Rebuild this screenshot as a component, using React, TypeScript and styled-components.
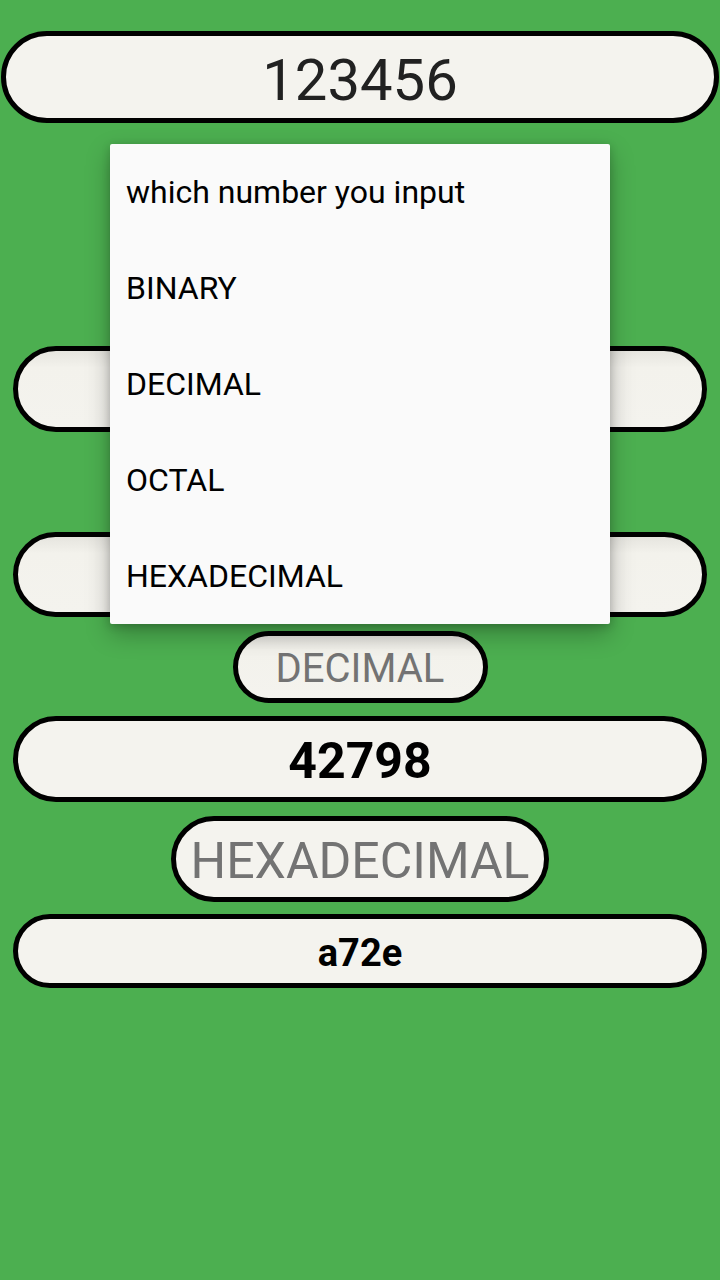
import React from "react";
import styled, { createGlobalStyle } from "styled-components";

const Global = createGlobalStyle`
  html, body { margin: 0; padding: 0; background: #4caf50; }
  body { font-family: Roboto, "Noto Sans", sans-serif; }
  * { box-sizing: border-box; }
`;

const Screen = styled.div`
  position: relative;
  width: 720px;
  height: 1280px;
  background: #4caf50;
  display: flex;
  flex-direction: column;
  align-items: center;
  padding-top: 31px;
  overflow: hidden;
`;

const Pill = styled.div<{ $w: number; $h: number; $mt: number; $shade?: boolean }>`
  width: ${(p) => p.$w}px;
  height: ${(p) => p.$h}px;
  margin-top: ${(p) => p.$mt}px;
  flex-shrink: 0;
  border: 5px solid #000;
  border-radius: 999px;
  background: ${(p) =>
    p.$shade
      ? "linear-gradient(180deg, #e6e5df 0%, #f3f2ec 22%, #f4f3ee 100%)"
      : "#f4f3ee"};
  display: flex;
  align-items: center;
  justify-content: center;
  overflow: hidden;
`;

const InputText = styled.span`
  font-family: Roboto, sans-serif;
  font-size: 58px;
  color: #212121;
  line-height: 1;
  padding-top: 5px;
`;

const Label = styled.span<{ $size: number }>`
  font-family: Roboto, sans-serif;
  font-size: ${(p) => p.$size}px;
  color: #737373;
  line-height: 1;
  white-space: nowrap;
  padding-top: 3px;
`;

const Result = styled.span<{ $size: number }>`
  font-family: Roboto, sans-serif;
  font-weight: 700;
  font-size: ${(p) => p.$size}px;
  color: #000;
  line-height: 1;
  padding-top: 4px;
`;

const Menu = styled.div`
  position: absolute;
  left: 110px;
  top: 144px;
  width: 500px;
  background: #fafafa;
  border-radius: 2px;
  box-shadow: 0 10px 24px rgba(0, 0, 0, 0.28), 0 2px 8px rgba(0, 0, 0, 0.18);
  display: flex;
  flex-direction: column;
`;

const MenuItem = styled.div`
  height: 96px;
  display: flex;
  align-items: center;
  padding-left: 16px;
  font-family: Roboto, sans-serif;
  font-size: 32px;
  color: #000;
  white-space: nowrap;
`;

const options = ["which number you input", "BINARY", "DECIMAL", "OCTAL", "HEXADECIMAL"];

export default function App() {
  return (
    <>
      <Global />
      <Screen>
        <Pill $w={718} $h={92} $mt={0}>
          <InputText>123456</InputText>
        </Pill>
        <Pill $w={694} $h={86} $mt={223} $shade />
        <Pill $w={694} $h={85} $mt={100} $shade />
        <Pill $w={255} $h={72} $mt={14} $shade>
          <Label $size={40}>DECIMAL</Label>
        </Pill>
        <Pill $w={694} $h={86} $mt={13}>
          <Result $size={50}>42798</Result>
        </Pill>
        <Pill $w={378} $h={86} $mt={14}>
          <Label $size={50}>HEXADECIMAL</Label>
        </Pill>
        <Pill $w={694} $h={74} $mt={12}>
          <Result $size={38}>a72e</Result>
        </Pill>
        <Menu>
          {options.map((o) => (
            <MenuItem key={o}>{o}</MenuItem>
          ))}
        </Menu>
      </Screen>
    </>
  );
}
